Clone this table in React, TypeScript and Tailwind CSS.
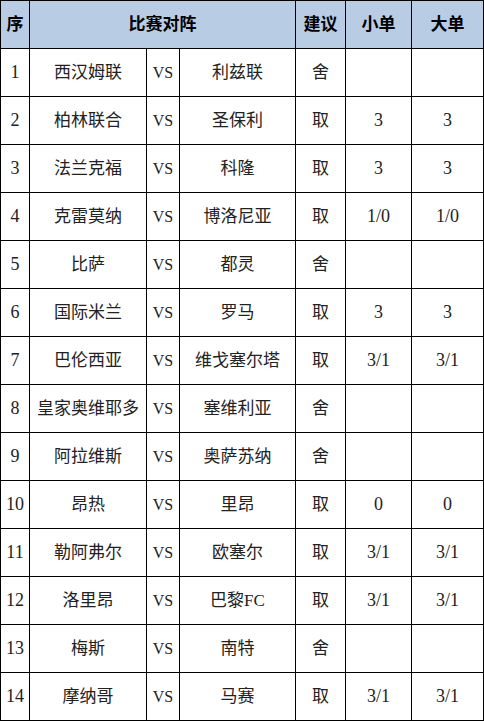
import React from "react";

const rows: [string, string, string, string, string, string][] = [
  ["1", "西汉姆联", "利兹联", "舍", "", ""],
  ["2", "柏林联合", "圣保利", "取", "3", "3"],
  ["3", "法兰克福", "科隆", "取", "3", "3"],
  ["4", "克雷莫纳", "博洛尼亚", "取", "1/0", "1/0"],
  ["5", "比萨", "都灵", "舍", "", ""],
  ["6", "国际米兰", "罗马", "取", "3", "3"],
  ["7", "巴伦西亚", "维戈塞尔塔", "取", "3/1", "3/1"],
  ["8", "皇家奥维耶多", "塞维利亚", "舍", "", ""],
  ["9", "阿拉维斯", "奥萨苏纳", "舍", "", ""],
  ["10", "昂热", "里昂", "取", "0", "0"],
  ["11", "勒阿弗尔", "欧塞尔", "取", "3/1", "3/1"],
  ["12", "洛里昂", "巴黎FC", "取", "3/1", "3/1"],
  ["13", "梅斯", "南特", "舍", "", ""],
  ["14", "摩纳哥", "马赛", "取", "3/1", "3/1"],
];

const cell =
  "h-[48px] border-r border-b border-black flex items-center justify-center whitespace-nowrap";
const head = cell + " bg-[#b8cce4] font-bold text-black";
const num = cell + " text-[18px]";

export default function App() {
  return (
    <div
      className="w-[484px] bg-white"
      style={{ fontFamily: '"Liberation Serif", "Noto Sans CJK SC", serif' }}
    >
      <div className="grid grid-cols-[29px_117px_33px_116px_50px_66px_72px] border-t border-l border-black text-[17px] text-[#222]">
        <div className={head}>序</div>
        <div className={head + " col-span-3"}>比赛对阵</div>
        <div className={head}>建议</div>
        <div className={head}>小单</div>
        <div className={head}>大单</div>
        {rows.map((r) => (
          <React.Fragment key={r[0]}>
            <div className={num}>{r[0]}</div>
            <div className={cell}>{r[1]}</div>
            <div className={cell + " text-[16px]"}>VS</div>
            <div className={cell}>{r[2]}</div>
            <div className={cell}>{r[3]}</div>
            <div className={num}>{r[4]}</div>
            <div className={num}>{r[5]}</div>
          </React.Fragment>
        ))}
      </div>
    </div>
  );
}
